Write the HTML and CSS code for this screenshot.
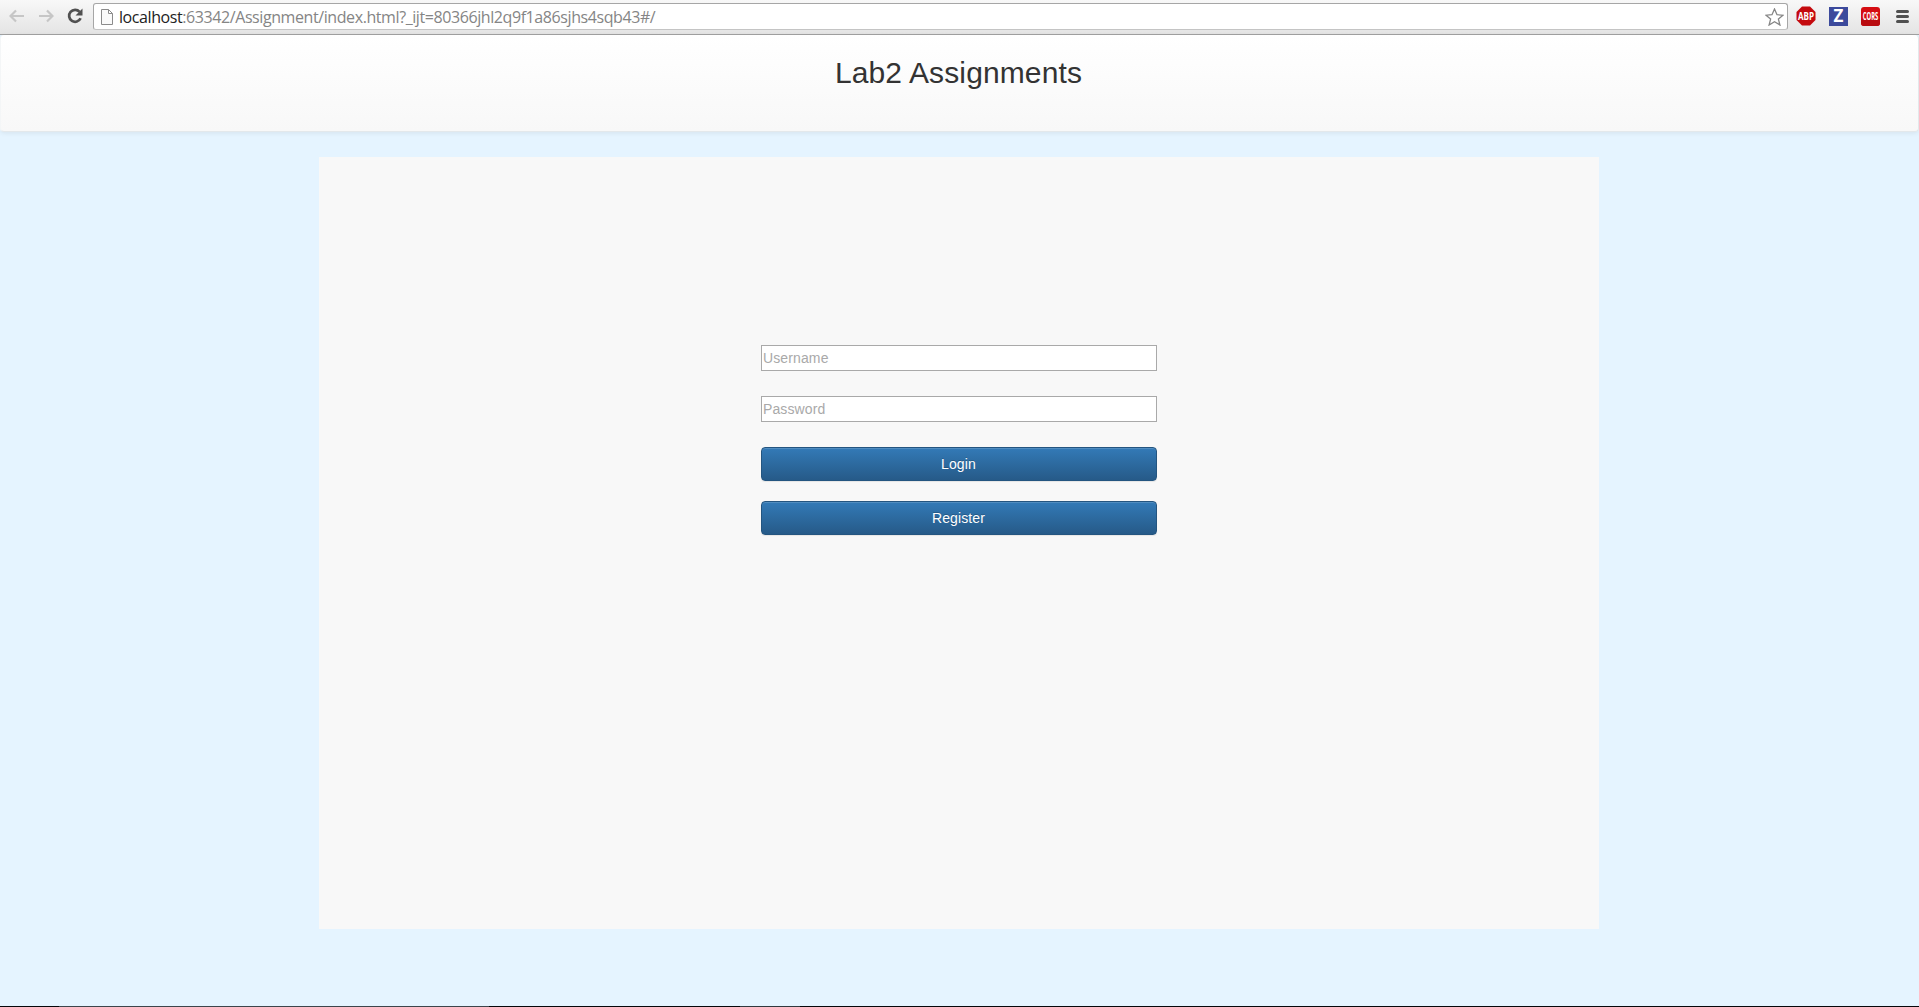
FILE: index.html
```html
<!DOCTYPE html>
<html lang="en">
<head>
<meta charset="utf-8">
<title>Lab2 Assignments</title>
<link rel="stylesheet" href="styles.css">
</head>
<body>
<div class="toolbar">
  <svg class="arrow" width="16" height="14" viewBox="0 0 16 14"><path d="M15 7H2M7 1.500L1.500 7L7 12.500"/></svg>
  <svg class="arrow forward" width="16" height="14" viewBox="0 0 16 14"><path d="M1 7h13M9 1.500L14.500 7L9 12.500"/></svg>
  <svg class="reload" width="16" height="16" viewBox="0 0 16 16"><path class="ring" d="M12.600 3.800A6 6 0 1 0 13.600 10.300"/><path class="tip" d="M15.500 0.500V7.500H8.500Z"/></svg>
  <div class="address">
    <svg class="page-icon" width="12" height="16" viewBox="0 0 12 16"><path d="M.5.500H7.500L11.500 4.500V15.500H.5ZM7.500.5V4.500H11.500"/></svg>
    <span class="url"><span class="host">localhost</span>:63342/Assignment/index.html?_ijt=80366jhl2q9f1a86sjhs4sqb43#/</span>
    <svg class="star" width="19" height="18" viewBox="0 0 19 18"><path d="M9.500 1L12 6.700L18 7.200L13.400 11.100L14.900 17L9.500 13.800L4.100 17L5.600 11.100L1 7.200L7 6.700Z"/></svg>
  </div>
  <svg class="ext abp" width="20" height="20" viewBox="0 0 20 20"><path d="M6 .5H14L19.500 6V14L14 19.500H6L.5 14V6Z"/><text x="10" y="13.800" textLength="16" lengthAdjust="spacingAndGlyphs">ABP</text></svg>
  <svg class="ext zed" width="19" height="19" viewBox="0 0 19 19"><rect width="19" height="19"/><text x="9.500" y="15.300">Z</text></svg>
  <svg class="ext cors" width="19" height="19" viewBox="0 0 19 19"><rect width="19" height="19" rx="3"/><path class="shade" d="M0 12H19V16a3 3 0 0 1-3 3H3a3 3 0 0 1-3-3Z"/><text x="9.500" y="12.800" textLength="15.500" lengthAdjust="spacingAndGlyphs">CORS</text></svg>
  <svg class="menu" width="13" height="13" viewBox="0 0 13 13"><path d="M1.500 1.500h10M1.500 6.500h10M1.500 11.500h10"/></svg>
</div>
<header class="navbar"><h1>Lab2 Assignments</h1></header>
<main class="panel">
  <form class="login">
    <input type="text" placeholder="Username">
    <input type="password" placeholder="Password">
    <button type="button">Login</button>
    <button type="button">Register</button>
  </form>
</main>
<footer class="taskbar"></footer>
</body>
</html>
```
FILE: styles.css
```css
* { box-sizing: border-box; }
body {
  margin: 0;
  height: 1007px;
  display: flex;
  flex-direction: column;
  overflow: hidden;
  background: #e5f4ff;
  font-family: "Liberation Sans", Arial, sans-serif;
}
.toolbar {
  flex: none;
  height: 35px;
  display: flex;
  align-items: flex-start;
  padding: 3px 10px 0 9px;
  background: linear-gradient(#f8f8f8, #e4e4e4);
  border-bottom: 1px solid #a2a2a2;
}
.arrow { margin: 6px 13px 0 0; fill: none; stroke: #c6c6c6; stroke-width: 2.2; }
.forward { margin-right: 12px; }
.reload { margin: 5px 10px 0 1px; }
.ring { fill: none; stroke: #505050; stroke-width: 2.7; }
.tip { fill: #505050; }
.address {
  width: 1695px;
  height: 27px;
  display: flex;
  background: #fff;
  border: 1px solid #a6a6a6;
  border-bottom-color: #c4c4c4;
  border-radius: 3px;
  padding-left: 7px;
}
.page-icon { margin: 5px 6px 0 0; fill: #fafafa; stroke: #8b8b8b; }
.url {
  font: 16px/27px "Open Sans", "Noto Sans", sans-serif;
  height: 25px;
  letter-spacing: -.415px;
  color: #858585;
  white-space: nowrap;
}
.host { color: #222; }
.star { margin: 4px 3px 0 auto; fill: #fff; stroke: #858585; stroke-width: 1.3; }
.ext { margin-top: 4px; overflow: visible; }
.ext text { fill: #fff; text-anchor: middle; font-family: "Open Sans", sans-serif; font-weight: 700; }
.abp { margin-left: 8px; margin-top: 3px; fill: #c40a0e; }
.abp text { font-size: 10.5px; }
.zed { margin-left: 13px; fill: #3c4a9c; }
.zed text { font-size: 17px; }
.cors { margin-left: 13px; fill: #d50d12; }
.shade { fill: #b90c10; }
.cors text { font-size: 10px; }
.menu { margin: 7px 0 0 16px; fill: none; stroke: #505050; stroke-width: 3; stroke-linecap: round; }
.navbar {
  flex: none;
  height: 97px;
  background: linear-gradient(#fff, #f8f8f8);
  border: 1px solid #e3e8eb;
  border-top: 0;
  border-left-color: #f4f6f7;
  border-radius: 4px;
  box-shadow: 0 1px 5px rgba(0, 0, 0, .075);
}
.navbar h1 {
  margin: 21px 0 0;
  padding-right: 2px;
  font-size: 30px;
  line-height: 33px;
  font-weight: 400;
  letter-spacing: .12px;
  text-align: center;
  color: #333;
}
.panel {
  flex: none;
  width: 1280px;
  height: 772px;
  margin: 25px 0 0 319px;
  padding: 188px 0 0 442px;
  background: #f8f8f8;
}
.login { display: flex; flex-direction: column; width: 396px; }
.login input {
  height: 26px;
  margin: 0 0 25px;
  padding: 1px;
  border: 1px solid #a9a9a9;
  background: #fff;
  font: 14px/20px "Liberation Sans", Arial, sans-serif;
  letter-spacing: .12px;
}
.login input::placeholder { color: #a9a9a9; }
.login button {
  height: 34px;
  margin: 0 0 20px;
  padding: 1px 7px 1px 6px;
  border: 1px solid #245580;
  border-radius: 4px;
  background: linear-gradient(#337ab7, #265a88);
  box-shadow: inset 0 1px 0 rgba(255, 255, 255, .15), 0 1px 1px rgba(0, 0, 0, .075);
  color: #fff;
  font: 14px/20px "Liberation Sans", Arial, sans-serif;
  letter-spacing: .12px;
  text-shadow: 0 -1px 0 rgba(0, 0, 0, .2);
}
.taskbar {
  flex: none;
  height: 1px;
  margin-top: auto;
  background: linear-gradient(90deg, #05070a 59px, #3c444b 59px 489px, #05070a 489px 740px, #30383e 740px 800px, #05070a 800px);
}
```
